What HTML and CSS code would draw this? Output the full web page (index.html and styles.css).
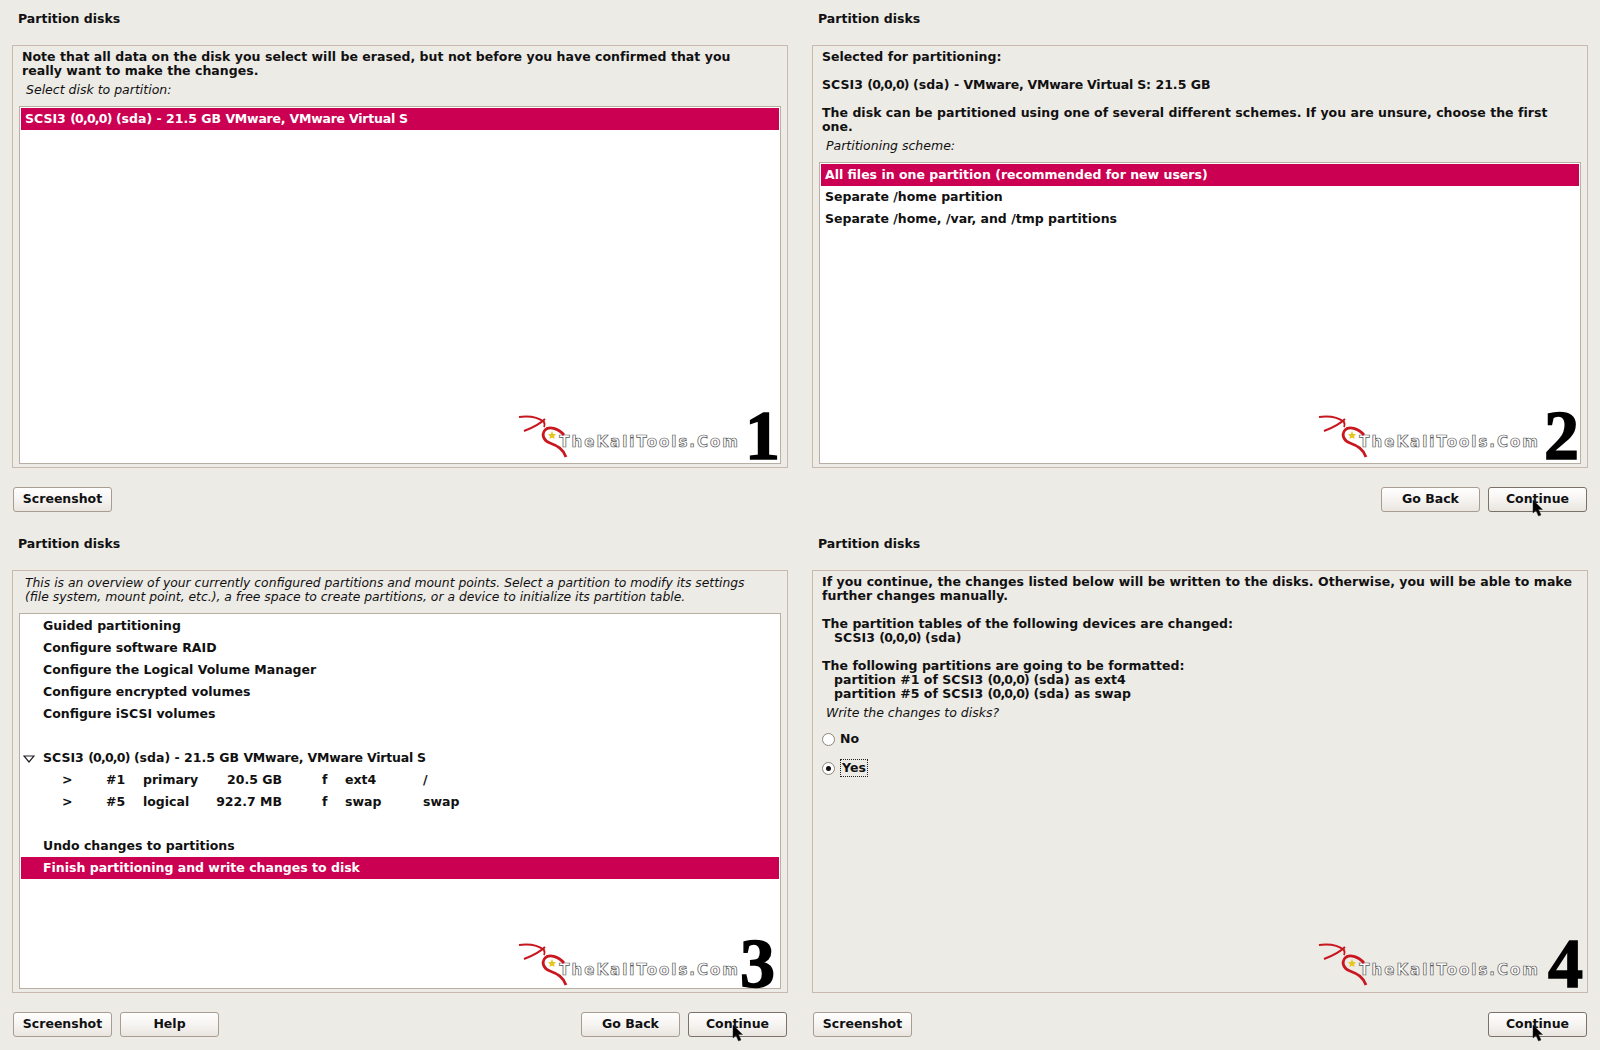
FILE: index.html
```html
<!DOCTYPE html>
<html lang="en">
<head>
  <meta charset="UTF-8">
  <title>Partition disks</title>
  <link rel="stylesheet" href="styles.css">
</head>
<body>

  <svg class="defs" width="0" height="0">
    <symbol id="dragon" viewBox="0 0 60 46">
      <path d="M1 3 C10 2 20 3 26 8 C27 10 27 11 26 13" fill="none" stroke="#c8171f" stroke-width="2"/>
      <path d="M6 17 C14 14 21 11 27 5" fill="none" stroke="#c8171f" stroke-width="2"/>
      <path d="M46 21 C40 14 31 12 27 16 C23 21 26 27 32 29 C40 32 45 35 48 43" fill="none" stroke="#c8171f" stroke-width="2.8"/>
      <path d="M34 17 L35.2 20 L38 20.3 L36 22.2 L36.6 25 L34 23.6 L31.4 25 L32 22.2 L30 20.3 L32.8 20 Z" fill="#e8c51c"/>
    </symbol>
    <symbol id="cursor" viewBox="0 0 12 18">
      <path d="M1 0 L1 13 L4 10.5 L6.5 16 L9 15 L6.5 9.5 L10.5 9.5 Z" fill="#000" stroke="#333" stroke-width=".5"/>
    </symbol>
  </svg>

  <div class="screens">

    <section class="screen">
      <h1 class="title">Partition disks</h1>
      <div class="panel">
        <p class="note">Note that all data on the disk you select will be erased, but not before you have confirmed that you<br>really want to make the changes.</p>
        <p class="prompt">Select disk to partition:</p>
        <div class="list">
          <div class="row row-flush selected">SCSI3 <span class="tight">(0,0,0)</span> (sda) - 21.5 GB <span class="vm">VMware, VMware Virtual S</span></div>
          <div class="mark">
            <svg class="dragon"><use href="#dragon"/></svg>
            <span class="site">TheKaliTools.Com</span>
            <span class="num num-one">1</span>
          </div>
        </div>
      </div>
      <div class="buttons">
        <button class="btn">Screenshot</button>
      </div>
    </section>

    <section class="screen">
      <h1 class="title">Partition disks</h1>
      <div class="panel">
        <p class="note gap">Selected for partitioning:</p>
        <p class="note gap">SCSI3 <span class="tight">(0,0,0)</span> (sda) - <span class="vm">VMware, VMware Virtual S</span>: 21.5 GB</p>
        <p class="note">The disk can be partitioned using one of several different schemes. If you are unsure, choose the first<br>one.</p>
        <p class="prompt">Partitioning scheme:</p>
        <div class="list">
          <div class="row row-flush selected">All files in one partition (recommended for new users)</div>
          <div class="row row-flush">Separate /home partition</div>
          <div class="row row-flush">Separate /home, /var, and /tmp partitions</div>
          <div class="mark">
            <svg class="dragon"><use href="#dragon"/></svg>
            <span class="site">TheKaliTools.Com</span>
            <span class="num">2</span>
          </div>
        </div>
      </div>
      <div class="buttons">
        <span class="spacer"></span>
        <button class="btn">Go Back</button>
        <button class="btn focus">Continue<svg class="cursor"><use href="#cursor"/></svg></button>
      </div>
    </section>

    <section class="screen">
      <h1 class="title">Partition disks</h1>
      <div class="panel">
        <p class="overview">This is an overview of your currently configured partitions and mount points. Select a partition to modify its settings<br>(file system, mount point, etc.), a free space to create partitions, or a device to initialize its partition table.</p>
        <div class="list">
          <div class="row">Guided partitioning</div>
          <div class="row">Configure software RAID</div>
          <div class="row">Configure the Logical Volume Manager</div>
          <div class="row">Configure encrypted volumes</div>
          <div class="row">Configure iSCSI volumes</div>
          <div class="row"></div>
          <div class="row tree">
            <svg class="arrow" width="12" height="8" viewBox="0 0 12 8"><path d="M1 1 H11 L6 7 Z" fill="none" stroke="#222" stroke-width="1.2"/></svg>
            SCSI3 <span class="tight">(0,0,0)</span> (sda) - 21.5 GB <span class="vm">VMware, VMware Virtual S</span>
          </div>
          <div class="part">
            <span>&gt;</span><span>#1</span><span>primary</span><span class="size">20.5 GB</span><span>f</span><span>ext4</span><span>/</span>
          </div>
          <div class="part">
            <span>&gt;</span><span>#5</span><span>logical</span><span class="size">922.7 MB</span><span>f</span><span>swap</span><span>swap</span>
          </div>
          <div class="row"></div>
          <div class="row">Undo changes to partitions</div>
          <div class="row selected">Finish partitioning and write changes to disk</div>
          <div class="mark mark-low">
            <svg class="dragon"><use href="#dragon"/></svg>
            <span class="site">TheKaliTools.Com</span>
            <span class="num num-three">3</span>
          </div>
        </div>
      </div>
      <div class="buttons">
        <button class="btn">Screenshot</button>
        <button class="btn">Help</button>
        <span class="spacer"></span>
        <button class="btn">Go Back</button>
        <button class="btn focus">Continue<svg class="cursor"><use href="#cursor"/></svg></button>
      </div>
    </section>

    <section class="screen">
      <h1 class="title">Partition disks</h1>
      <div class="panel">
        <p class="note gap">If you continue, the changes listed below will be written to the disks. Otherwise, you will be able to make<br>further changes manually.</p>
        <p class="note gap">The partition tables of the following devices are changed:<br><span class="indent">SCSI3 <span class="tight">(0,0,0)</span> (sda)</span></p>
        <p class="note">The following partitions are going to be formatted:<br><span class="indent">partition #1 of SCSI3 <span class="tight">(0,0,0)</span> (sda) as ext4</span><br><span class="indent">partition #5 of SCSI3 <span class="tight">(0,0,0)</span> (sda) as swap</span></p>
        <p class="prompt">Write the changes to disks?</p>
        <div class="radios">
          <div class="radio"><span class="dot"></span><span>No</span></div>
          <div class="radio"><span class="dot on"></span><span class="dotted">Yes</span></div>
        </div>
        <div class="mark mark-plain">
          <svg class="dragon"><use href="#dragon"/></svg>
          <span class="site">TheKaliTools.Com</span>
          <span class="num num-four">4</span>
        </div>
      </div>
      <div class="buttons">
        <button class="btn">Screenshot</button>
        <span class="spacer"></span>
        <button class="btn focus">Continue<svg class="cursor"><use href="#cursor"/></svg></button>
      </div>
    </section>

  </div>

</body>
</html>
```

FILE: styles.css
```css
body {
  margin: 0;
  background-color: #edebe6;
  color: #111;
  font-family: "DejaVu Sans", sans-serif;
  font-size: 12.5px;
  font-weight: bold;
  line-height: 14px;
}
.defs {
  position: absolute;
}
.screens {
  display: grid;
  grid-template-columns: 800px 800px;
  grid-template-rows: 525px 525px;
  width: 1600px;
  height: 1050px;
  overflow: hidden;
}
.screen {
  display: flex;
  flex-direction: column;
  padding: 0 12px;
}
.title {
  margin: 0;
  padding: 12px 0 0 6px;
  height: 45px;
  box-sizing: border-box;
  font-size: 12.5px;
  line-height: 14px;
}
.panel {
  position: relative;
  display: flex;
  flex-direction: column;
  height: 423px;
  box-sizing: border-box;
  padding: 4px 6px 3px 6px;
  border: 1px solid #c8b9ae;
}
p {
  margin: 0;
}
.note {
  padding-left: 3px;
  letter-spacing: 0.03px;
  white-space: nowrap;
}
.gap {
  margin-bottom: 14px;
}
.indent {
  padding-left: 12px;
}
.tight {
  letter-spacing: -0.8px;
}
.vm {
  letter-spacing: -0.22px;
}
.prompt {
  padding: 5px 0 9px 7px;
  font-style: italic;
  font-weight: normal;
}
.overview {
  padding: 1px 0 9px 6px;
  font-size: 12.35px;
  font-style: italic;
  font-weight: normal;
  white-space: nowrap;
}
.list {
  position: relative;
  flex: 1;
  padding: 1px;
  background-color: #fff;
  border: 1px solid #b8aea2;
}
.row {
  height: 22px;
  padding-left: 22px;
  line-height: 22px;
  white-space: nowrap;
}
.row-flush {
  padding-left: 4px;
}
.selected {
  background-color: #cc0052;
  color: #fff;
}
.tree {
  position: relative;
}
.arrow {
  position: absolute;
  left: 2px;
  top: 8px;
}
.part {
  display: grid;
  grid-template-columns: 44px 37px 60px 79px 63px 78px 60px;
  height: 22px;
  padding-left: 41px;
  line-height: 22px;
}
.size {
  text-align: right;
}
.part .size + span {
  padding-left: 40px;
}
.mark {
  position: absolute;
  right: 2px;
  bottom: 2px;
  display: flex;
  align-items: flex-end;
  height: 56px;
}
.mark-low {
  bottom: -1px;
}
.mark-plain {
  right: 9px;
  bottom: 3px;
}
.dragon {
  position: absolute;
  right: 200px;
  bottom: 1px;
  width: 60px;
  height: 46px;
}
.site {
  margin: 0 4px 11px 0;
  color: #fff;
  font-size: 15px;
  line-height: 16px;
  font-weight: bold;
  letter-spacing: 2px;
  -webkit-text-stroke: 0.7px #555;
}
.num {
  width: 34px;
  color: #000;
  font-family: "Liberation Serif", serif;
  font-size: 70px;
  line-height: 50px;
  font-weight: bold;
  text-align: center;
  -webkit-text-stroke: 1.5px #000;
}
.num-one {
  transform: translateX(1px);
}
.num-three {
  transform: translateX(-4px);
}
.num-four {
  transform: translateX(4px);
}
.radios {
  display: flex;
  flex-direction: column;
  gap: 9px;
  padding-left: 3px;
}
.radio {
  display: flex;
  align-items: center;
  gap: 5px;
  height: 20px;
}
.dot {
  position: relative;
  width: 11px;
  height: 11px;
  background-color: #fff;
  border: 1px solid #8d857b;
  border-radius: 50%;
}
.dot.on::after {
  content: "";
  position: absolute;
  left: 3px;
  top: 3px;
  width: 5px;
  height: 5px;
  background-color: #111;
  border-radius: 50%;
}
.dotted {
  padding: 1px;
  border: 1px dotted #222;
}
.buttons {
  display: flex;
  gap: 8px;
  padding: 19px 1px 0 1px;
}
.spacer {
  flex: 1;
}
.btn {
  position: relative;
  width: 99px;
  height: 25px;
  padding: 0 0 2px;
  color: #111;
  font-family: "DejaVu Sans", sans-serif;
  font-size: 12.5px;
  font-weight: bold;
  background: linear-gradient(#fff, #f6f4f1 50%, #e9e5e0);
  border: 1px solid #a89d90;
  border-radius: 3px;
}
.btn.focus {
  border-color: #7a7268;
}
.cursor {
  position: absolute;
  left: 43px;
  top: 12px;
  width: 12px;
  height: 18px;
}
```
